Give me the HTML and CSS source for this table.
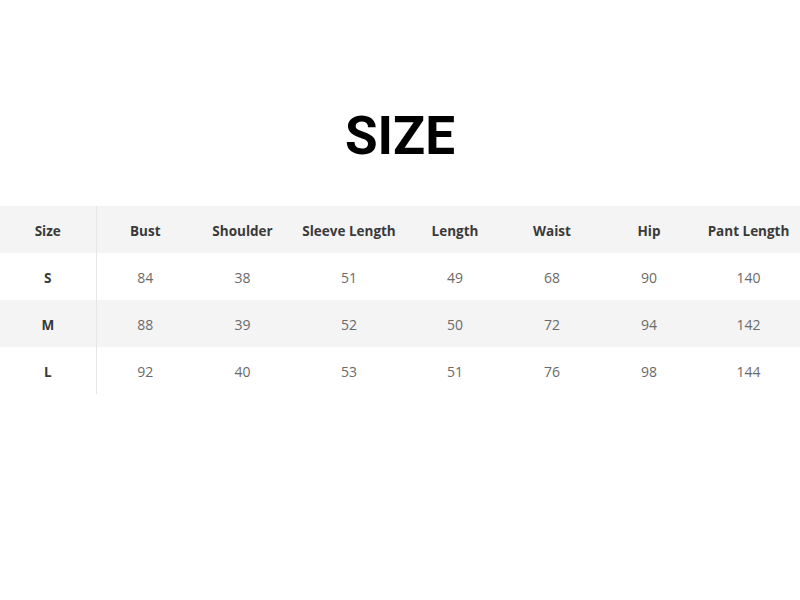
FILE: index.html
```html
<!DOCTYPE html>
<html>
<head>
<meta charset="utf-8">
<link rel="stylesheet" href="styles.css">
</head>
<body>
<div class="page">
  <h1 class="title">SIZE</h1>
  <table class="chart">
    <colgroup>
      <col class="c1"><col class="c2"><col class="c3"><col class="c4"><col class="c5"><col class="c6"><col class="c7"><col class="c8">
    </colgroup>
    <thead>
      <tr><th class="first">Size</th><th>Bust</th><th>Shoulder</th><th>Sleeve Length</th><th>Length</th><th>Waist</th><th>Hip</th><th>Pant Length</th></tr>
    </thead>
    <tbody>
      <tr><th class="first">S</th><td>84</td><td>38</td><td>51</td><td>49</td><td>68</td><td>90</td><td>140</td></tr>
      <tr class="alt"><th class="first">M</th><td>88</td><td>39</td><td>52</td><td>50</td><td>72</td><td>94</td><td>142</td></tr>
      <tr><th class="first">L</th><td>92</td><td>40</td><td>53</td><td>51</td><td>76</td><td>98</td><td>144</td></tr>
    </tbody>
  </table>
</div>
</body>
</html>
```

FILE: styles.css
```css
html, body {
  margin: 0;
  padding: 0;
  background: #ffffff;
}
.page {
  width: 800px;
  height: 600px;
  padding-top: 106px;
  box-sizing: border-box;
}
.title {
  margin: 0;
  height: 100px;
  font-family: Roboto, "Liberation Sans", sans-serif;
  font-weight: 700;
  font-size: 53px;
  line-height: 60px;
  text-align: center;
  color: #000;
}
.chart {
  width: 800px;
  border-collapse: collapse;
  table-layout: fixed;
  font-family: "Open Sans", "Liberation Sans", sans-serif;
  font-size: 13.5px;
}
.c1 { width: 96px; }
.c2 { width: 98px; }
.c3 { width: 97px; }
.c4 { width: 116px; }
.c5 { width: 96px; }
.c6 { width: 98px; }
.c7 { width: 96px; }
.c8 { width: 103px; }
.chart th, .chart td {
  height: 47px;
  padding: 2px 0 0 0;
  box-sizing: border-box;
  text-align: center;
  vertical-align: middle;
}
.chart thead tr { background: #f4f4f4; }
.chart tr.alt { background: #f4f4f4; }
.chart th {
  font-weight: 700;
  color: #3a3a3a;
}
.chart td {
  color: #6a6a6a;
  font-size: 14px;
}
.chart .first {
  border-right: 1px solid #e6e6e6;
}
```
